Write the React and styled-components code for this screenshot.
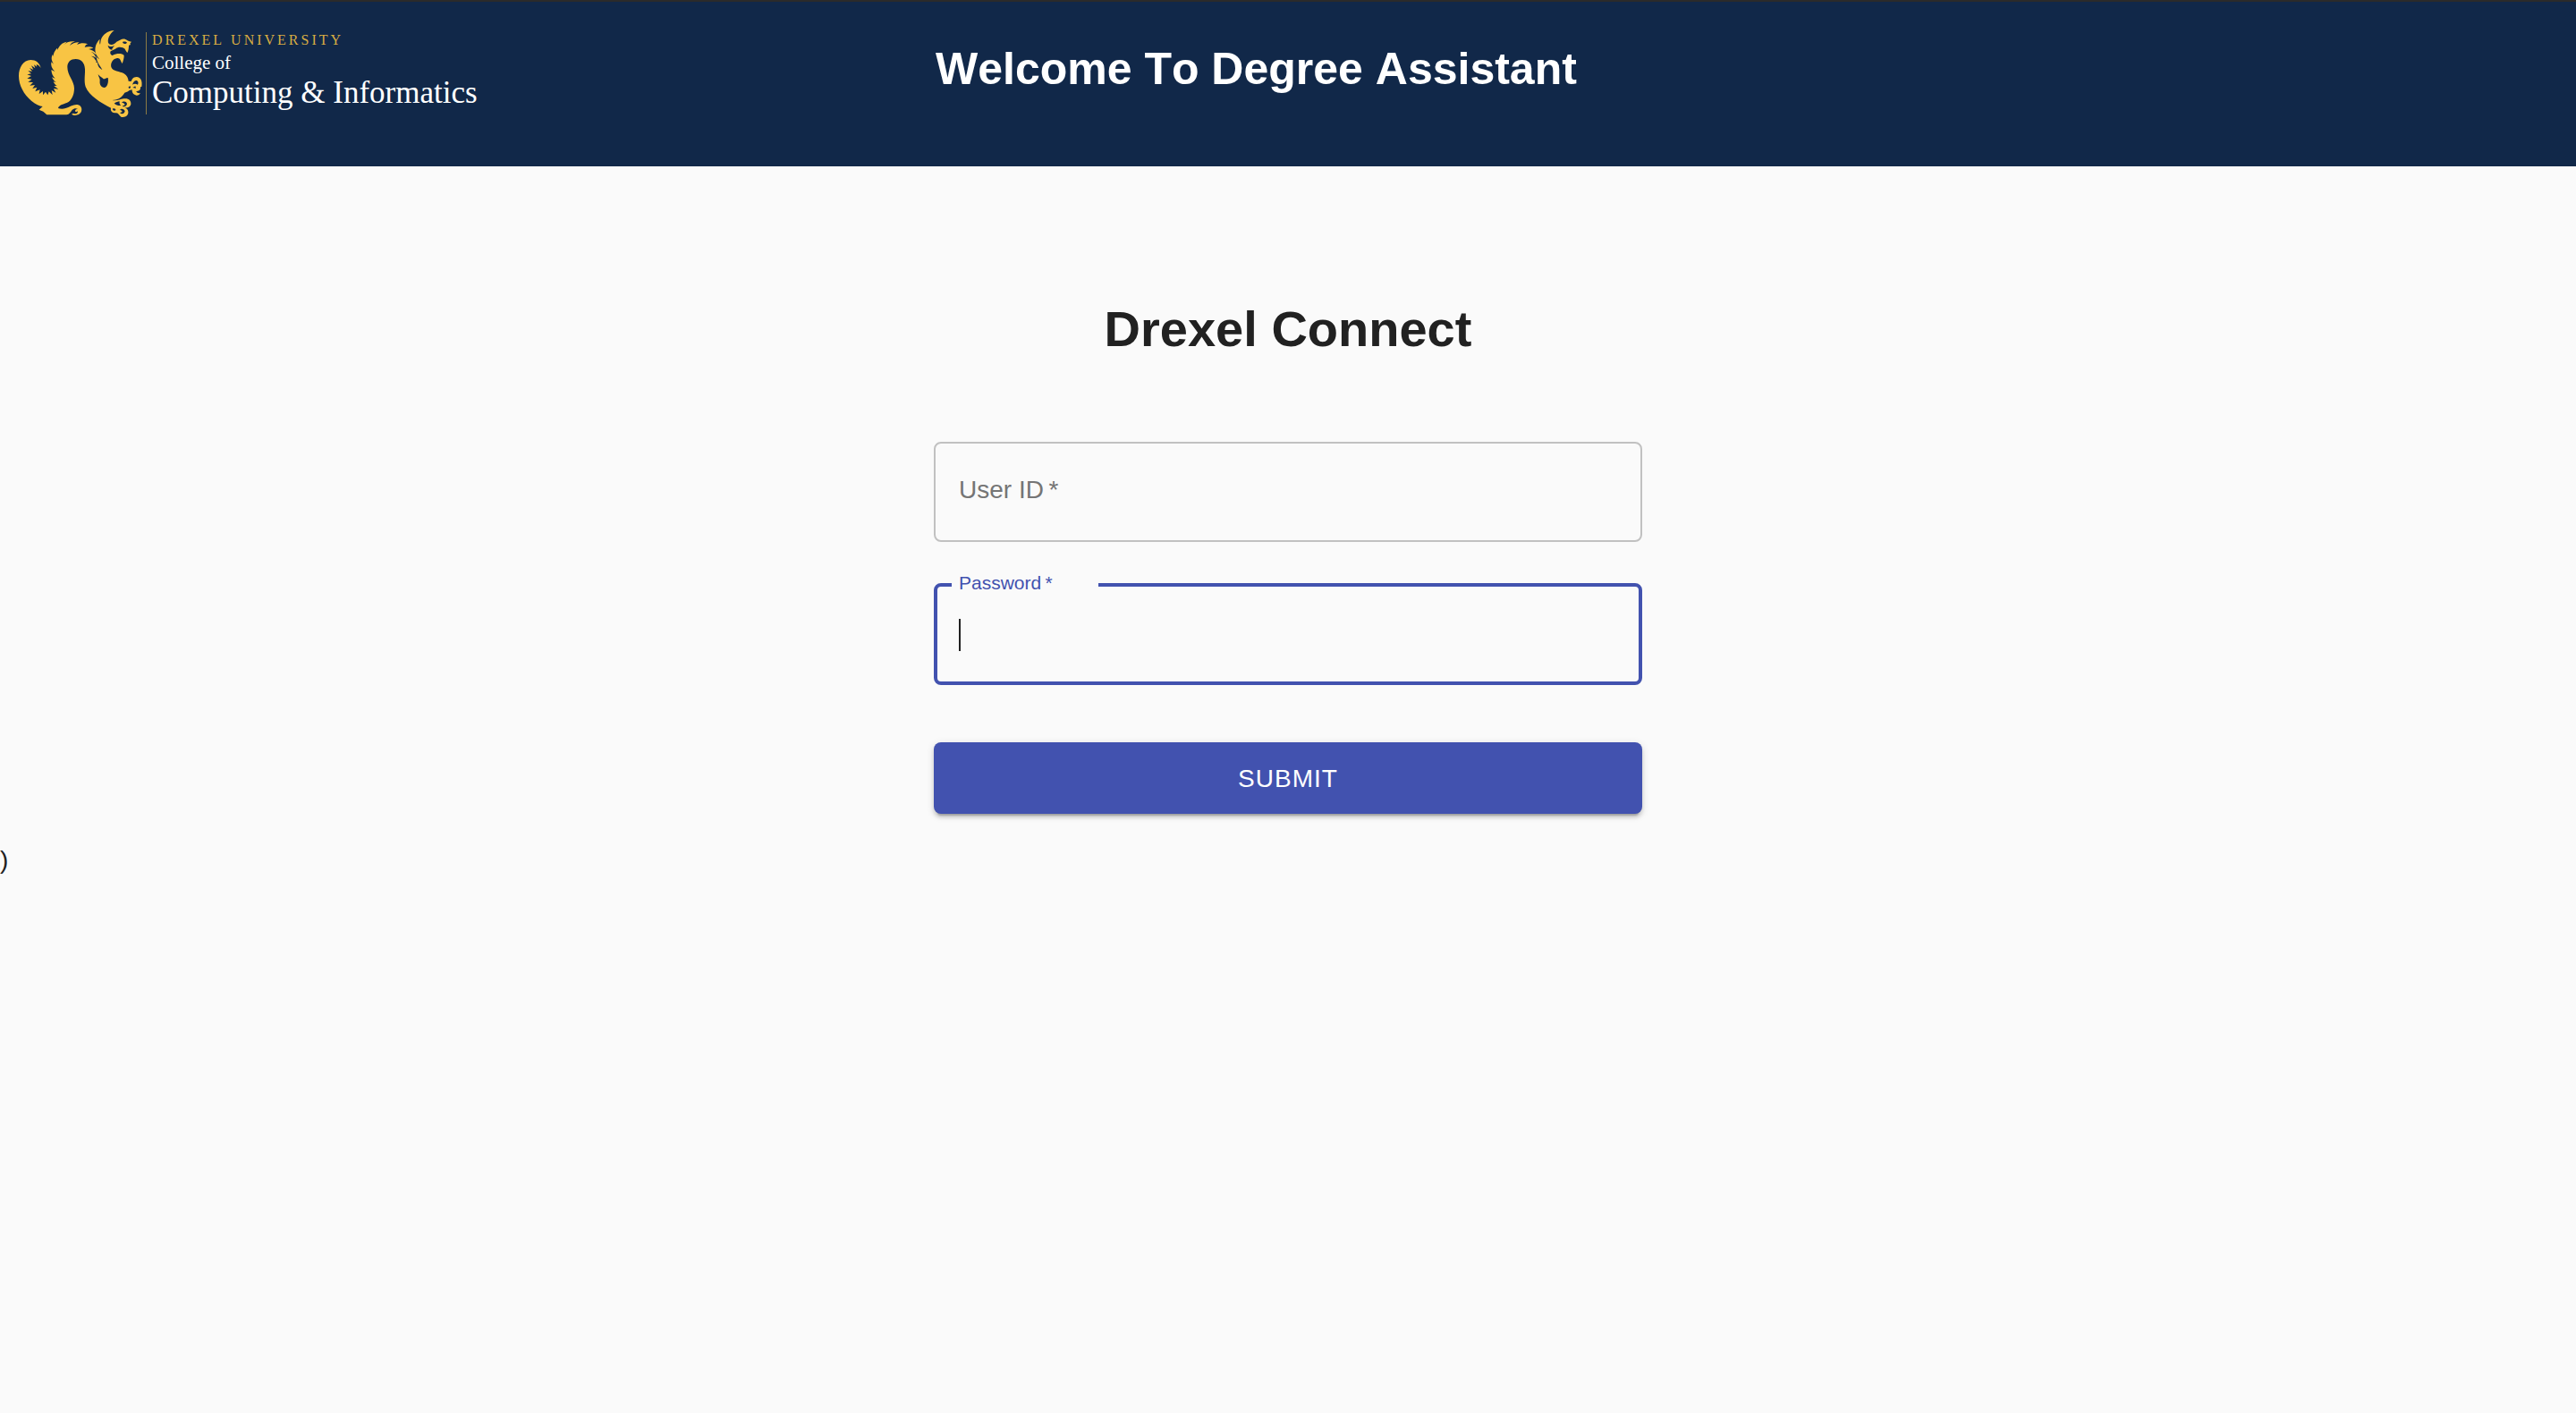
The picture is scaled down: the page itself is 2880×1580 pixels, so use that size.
import React from "react";
import styled, { createGlobalStyle } from "styled-components";

const NAVY = "#112849";
const GOLD = "#f8c444";
const INDIGO = "#4252af";
const PAPER = "#fafafa";

const GlobalStyle = createGlobalStyle`
  *, *::before, *::after { box-sizing: border-box; }
  body {
    margin: 0;
    background: ${PAPER};
    color: #212121;
    font-family: "Liberation Sans", Arial, sans-serif;
    font-size: 28px;
    line-height: 40px;
    font-kerning: none;
  }
`;

const Header = styled.header`
  display: grid;
  grid-template-columns: 1fr minmax(0, 792px) 1fr;
  align-items: start;
  min-height: 186px;
  padding-top: 18px;
  border-top: 2px solid #2b2b2b;
  background: ${NAVY};
`;

const Brand = styled.a`
  display: flex;
  align-items: flex-start;
  padding-left: 10px;
  color: #fff;
  font-family: "Liberation Serif", Georgia, serif;
  text-decoration: none;
  white-space: nowrap;
`;

const DragonMark = styled.svg`
  display: block;
  flex: none;
  width: 153px;
  height: 120px;
`;

const BrandText = styled.span`
  display: flex;
  flex-direction: column;
  height: 92px;
  margin-top: 16px;
  padding-left: 6px;
  border-left: 1px solid #8a7a45;
`;

const University = styled.span`
  color: #d8ad43;
  font-size: 16px;
  line-height: 18px;
  letter-spacing: 3px;
`;

const College = styled.span`
  font-size: ${(p) => (p.$large ? "35px" : "21px")};
  line-height: ${(p) => (p.$large ? "36px" : "32px")};
`;

const Title = styled.h1`
  margin: 0;
  padding: 28px 0 0 2px;
  color: #fff;
  font-size: 50px;
  line-height: 58px;
  white-space: nowrap;
`;

const Main = styled.main`
  display: flex;
  flex-direction: column;
  align-items: center;
  padding-top: 150px;
`;

const Heading = styled.h2`
  margin: 0;
  font-size: 56px;
  line-height: 64px;
`;

const Form = styled.form`
  display: flex;
  flex-direction: column;
  gap: 46px;
  width: 100%;
  max-width: 792px;
  margin-top: 94px;
`;

const Field = styled.div`
  position: relative;
`;

const Label = styled.label`
  position: absolute;
  top: ${(p) => (p.$floating ? "-12px" : "38px")};
  left: 20px;
  width: 164px;
  padding-left: 8px;
  background: ${PAPER};
  color: ${(p) => (p.$floating ? INDIGO : "#757575")};
  font-size: ${(p) => (p.$floating ? "21px" : "28px")};
  line-height: ${(p) => (p.$floating ? "24px" : "32px")};
`;

const Input = styled.input`
  display: block;
  width: 100%;
  height: ${(p) => (p.$active ? "114px" : "112px")};
  padding: 36px 26px;
  border: ${(p) => (p.$active ? `4px solid ${INDIGO}` : "2px solid #c1c1c1")};
  border-radius: 8px;
  background: transparent;
  color: inherit;
  font: inherit;
  line-height: 36px;
  caret-color: transparent;
  outline: none;
`;

const Caret = styled.span`
  position: absolute;
  top: 40px;
  left: 28px;
  width: 2px;
  height: 36px;
  background: #212121;
`;

const Submit = styled.button`
  height: 80px;
  margin-top: 18px;
  padding-top: 2px;
  border: 0;
  border-radius: 8px;
  background: ${INDIGO};
  box-shadow: 0 6px 2px -4px rgba(0, 0, 0, 0.2), 0 4px 4px 0 rgba(0, 0, 0, 0.14),
    0 2px 10px 0 rgba(0, 0, 0, 0.12);
  color: #fff;
  font: inherit;
  letter-spacing: 1px;
  text-transform: uppercase;
  cursor: pointer;
`;

const Trailing = styled.div`
  padding-top: 32px;
`;

function Dragon() {
  return (
    <DragonMark viewBox="0 0 459 360" aria-hidden="true">
      <g fill={GOLD}>
        {/* tail, arched back and torso */}
        <path d="M107 168 C103 151 90 141 73 141 C48 142 33 166 33 195 C33 226 50 257 76 279 C90 290 102 296 113 297 L101 308 L115 314 L127 325 L193 325 C203 324 207 315 212 309 C218 303 226 302 231 306 C226 306 222 308 222 312 C222 316 228 316 231 313 C232 320 225 324 216 320 L210 323 C220 330 236 327 242 316 C247 305 242 293 230 291 C217 289 203 299 190 303 C181 306 171 305 165 303 C167 293 181 290 194 285 C211 277 219 257 219 236 C219 212 196 193 196 165 C196 148 207 138 224 138 C243 138 254 151 255 172 C256 188 251 213 257 231 C269 262 309 285 342 302 C339 314 350 320 360 319 C368 320 369 327 376 332 C390 335 402 327 400 314 C399 307 393 303 388 301 C400 302 407 298 409 290 C410 277 402 269 385 271 C371 273 364 279 346 276 C368 275 381 264 388 251 C397 249 400 246 404 243 L413 241 C412 250 418 259 428 260 C434 260 439 257 441 252 C434 254 427 250 427 246 C437 247 442 241 441 232 L445 231 C448 213 443 199 428 198 C416 198 412 207 410 213 L401 212 C400 202 396 193 386 187 C371 178 349 181 343 165 C340 149 350 137 363 135 C374 134 374 145 380 153 C383 146 386 136 386 126 C379 118 362 118 347 126 C340 124 338 118 341 112 L357 104 C366 95 382 97 389 104 C391 109 395 115 397 117 C401 110 402 99 402 92 L408 90 L406 86 L411 80 C401 79 396 73 389 71 C378 69 370 77 361 80 C354 89 339 95 333 83 C330 69 340 51 353 42 C331 43 312 57 308 76 L306 89 C304 88 303 79 305 71 C292 83 286 102 291 118 C292 124 299 133 303 139 C296 135 291 126 285 121 L293 122 C287 110 278 108 267 105 L283 101 C275 95 262 96 254 98 C257 91 261 88 265 88 C252 83 239 84 229 90 C230 86 233 83 237 82 C225 81 212 85 204 93 C208 85 214 81 222 79 C207 77 192 80 182 92 L194 80 C178 83 168 93 163 108 L162 101 C152 112 147 121 151 133 L147 122 C140 133 143 145 151 156 L142 148 C140 161 144 171 154 180 L142 174 C143 185 146 195 155 203 L144 199 C148 207 151 211 158 216 L149 214 C152 220 154 224 161 228 L151 228 L166 239 L150 237 L157 251 L143 243 L146 258 L134 247 L130 259 L123 248 L114 259 L114 246 L101 255 L104 241 L88 247 L94 233 L79 237 L87 225 L70 227 L81 216 L64 215 L77 206 L61 203 L75 195 L61 190 L75 187 L64 178 L78 179 L69 168 L82 174 L75 160 L88 169 L84 157 L94 164 L92 157 C98 157 104 163 107 168 Z" />
      </g>
      <g fill={NAVY}>
        {/* eye, wing, mane and claw cut-outs */}
        <path d="M381 81 C387 78 394 80 396 83 C392 89 382 88 381 81 Z" />
        <path d="M332 92 C337 98 348 97 354 92 C350 99 344 103 347 107 L340 106 C337 102 332 99 332 92 Z" />
        <path d="M299 189 C305 198 312 199 317 205 C323 205 327 200 332 201 C335 215 330 234 319 234 C305 231 304 219 305 211 C306 202 300 198 299 189 Z" />
        <path d="M276 114 C289 116 293 130 296 144 C300 156 308 164 313 174 C301 168 298 161 297 151 L291 148 L294 145 C287 140 288 133 276 128 C283 128 287 130 291 134 C290 124 284 119 276 114 Z" />
        <path d="M414 224 C417 214 422 209 429 210 C434 213 435 219 432 224 C425 219 418 221 414 224 Z" />
        <path d="M401 231 L407 229 L408 235 L402 237 Z" />
        <path d="M415 234 L424 229 L426 236 Z" />
        <path d="M353 287 C360 282 365 281 371 280 C370 287 371 291 376 294 C367 295 360 292 353 287 Z" />
        <path d="M378 284 C384 277 396 280 396 289 C394 298 386 299 380 296 L389 292 C388 287 384 284 378 284 Z" />
        <path d="M347 305 C353 302 359 305 358 310 C354 313 349 311 347 305 Z" />
        <path d="M372 309 C376 303 387 305 389 313 C387 323 377 324 372 318 L380 316 C380 312 377 309 372 309 Z" />
      </g>
    </DragonMark>
  );
}

function TextField({ id, type, label, active }) {
  return (
    <Field>
      <Input id={id} name={id} type={type} required $active={active} />
      <Label htmlFor={id} $floating={active}>
        {label}
        {"\u2009*"}
      </Label>
      {active && <Caret aria-hidden="true" />}
    </Field>
  );
}

export default function App() {
  return (
    <>
      <GlobalStyle />
      <Header>
        <Brand href="#">
          <Dragon />
          <BrandText>
            <University>DREXEL UNIVERSITY</University>
            <College>College of</College>
            <College $large>Computing &amp; Informatics</College>
          </BrandText>
        </Brand>
        <Title>Welcome To Degree Assistant</Title>
      </Header>
      <Main>
        <Heading>Drexel Connect</Heading>
        <Form onSubmit={(e) => e.preventDefault()}>
          <TextField id="userId" type="text" label="User ID" />
          <TextField id="password" type="password" label="Password" active />
          <Submit type="submit">Submit</Submit>
        </Form>
      </Main>
      <Trailing>)</Trailing>
    </>
  );
}
